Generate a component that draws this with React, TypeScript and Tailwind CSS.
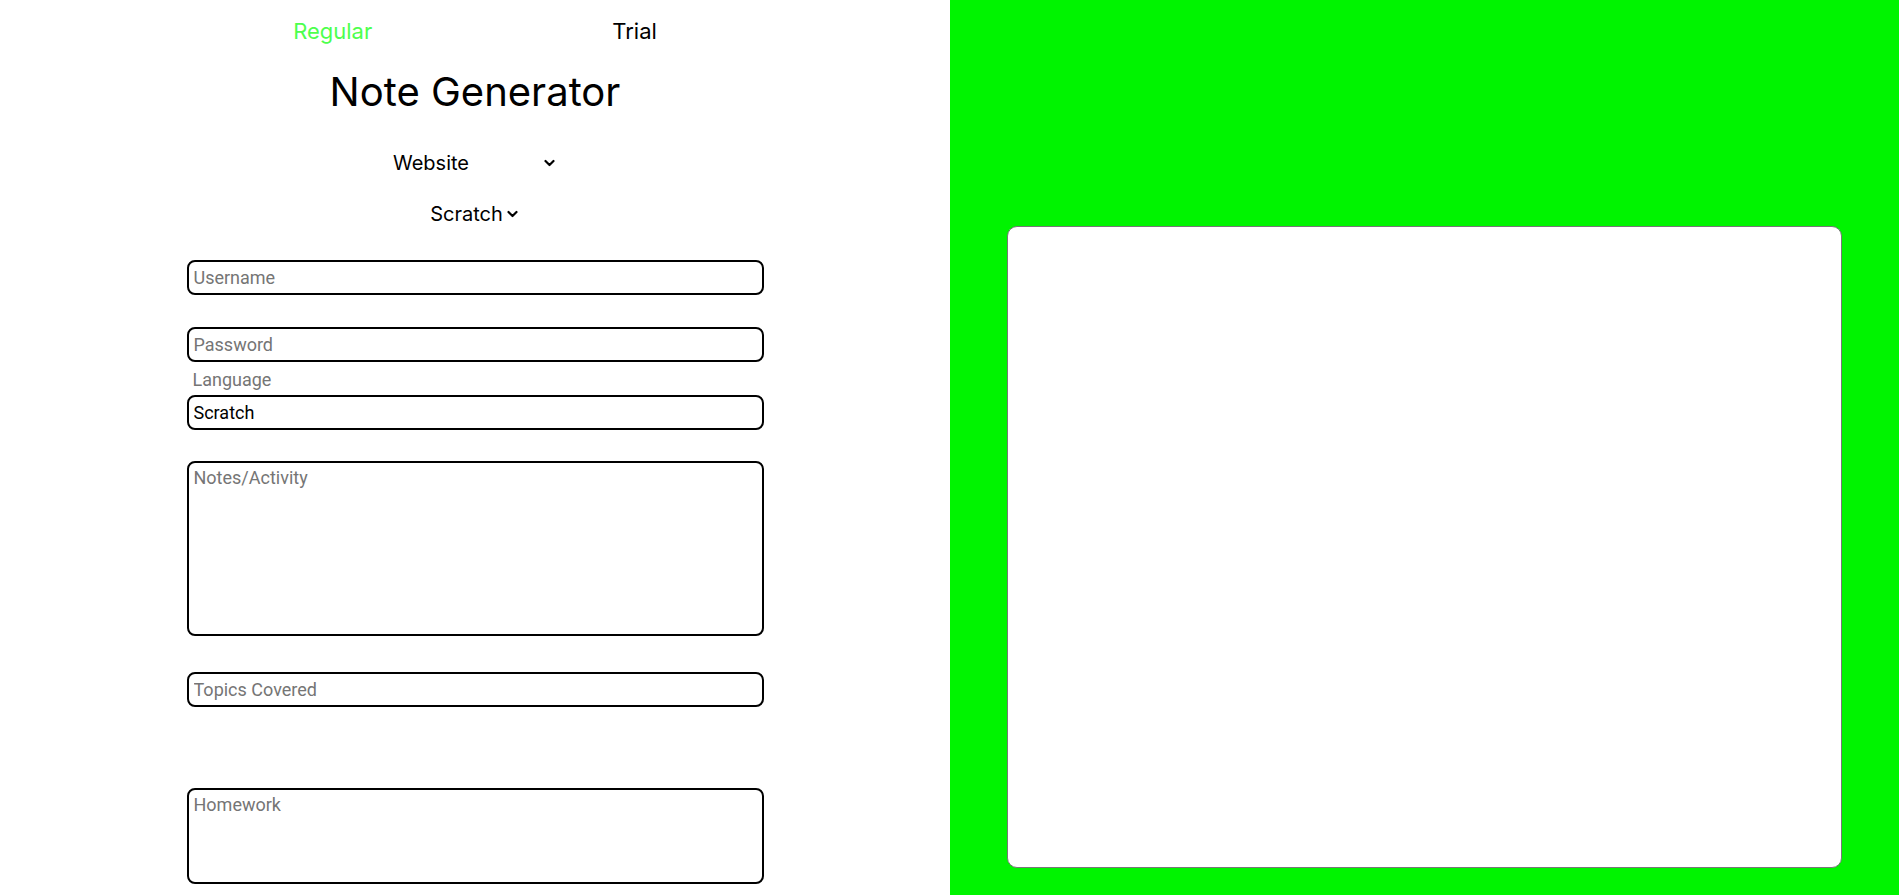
const inputCls =
  "w-full h-[35px] rounded-lg border-2 border-black px-[5px] text-[18px] text-black placeholder:text-[#757575] outline-none";

const areaCls =
  "w-full rounded-lg border-2 border-black px-[5px] py-[3px] text-[18px] leading-[24px] text-black placeholder:text-[#757575] outline-none resize-none";

function Chevron() {
  return (
    <svg width="11" height="8" viewBox="0 0 11 8" fill="none">
      <path d="M1.5 2 L5.5 6 L9.5 2" stroke="black" strokeWidth="2.2" strokeLinecap="round" strokeLinejoin="round" />
    </svg>
  );
}

export default function App() {
  return (
    <div className="flex w-full h-[895px] overflow-hidden font-['Inter',sans-serif]">
      {/* left: form */}
      <div className="flex flex-col items-center w-[950px] shrink-0 bg-white">
        <div className="flex justify-center gap-[240px] pt-[17px] text-[22px] leading-[28px]">
          <span className="text-[#4dff4d]">Regular</span>
          <span className="text-black">Trial</span>
        </div>
        <h1 className="mt-[25px] text-[40px] leading-[44px] text-black">Note Generator</h1>

        {/* dropdowns */}
        <div className="flex items-center justify-between w-[164px] mt-[35px] pr-[2px] text-[20px] leading-[28px] text-black">
          <span>Website</span>
          <Chevron />
        </div>
        <div className="flex items-center gap-[4px] mt-[23px] pr-[2px] text-[20px] leading-[28px] text-black">
          <span>Scratch</span>
          <Chevron />
        </div>

        <div className="flex flex-col w-[577px] mt-[32px] font-['Roboto',sans-serif]">
          <input className={inputCls} placeholder="Username" />
          <input className={`${inputCls} mt-[32px]`} placeholder="Password" />
          <label className="mt-[7px] px-[6px] text-[18px] leading-[22px] text-[#757575]">Language</label>
          <input className={`${inputCls} mt-[4px]`} defaultValue="Scratch" />
          <textarea className={`${areaCls} h-[175px] mt-[31px]`} placeholder="Notes/Activity" />
          <input className={`${inputCls} mt-[36px]`} placeholder="Topics Covered" />
          <textarea className={`${areaCls} h-[96px] mt-[81px]`} placeholder="Homework" />
        </div>
      </div>

      {/* right: preview */}
      <div className="flex-1 bg-[#00f400] pt-[226px] pb-[27px] px-[57px]">
        <div className="w-full h-full bg-white rounded-[10px] border border-[#777777]" />
      </div>
    </div>
  );
}
